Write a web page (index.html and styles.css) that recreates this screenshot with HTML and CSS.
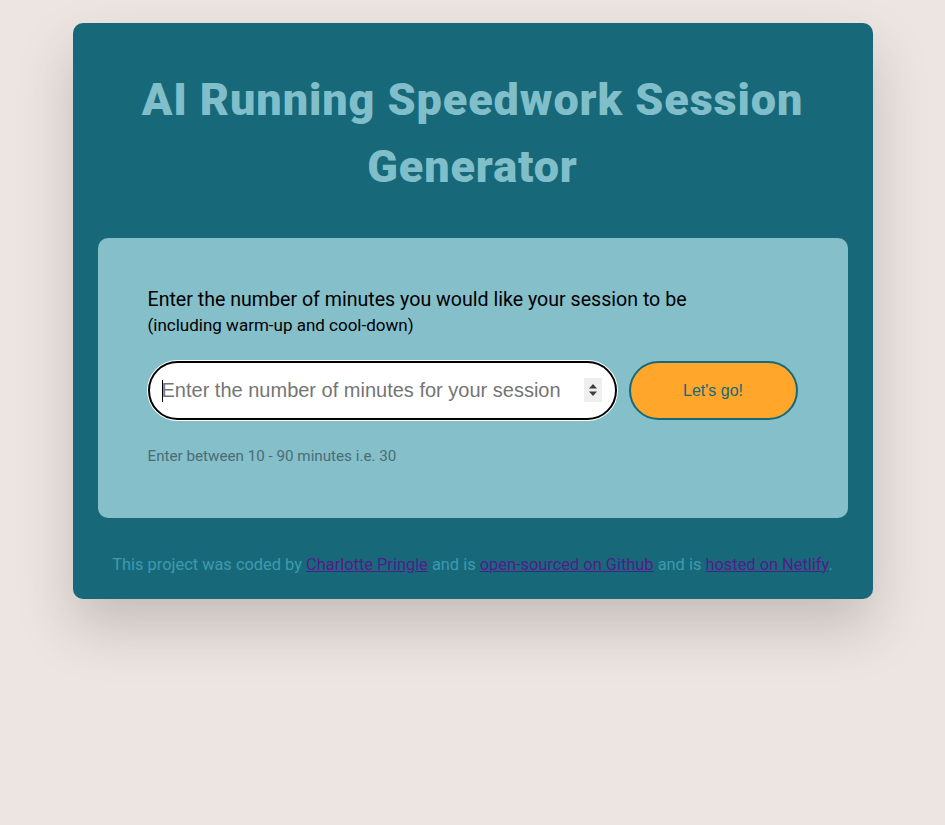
FILE: index.html
```html
<!DOCTYPE html>
<html lang="en">
<head>
<meta charset="utf-8">
<title>AI Running Speedwork Session Generator</title>
<link rel="stylesheet" href="styles.css">
</head>
<body>
<div class="container">
  <h1 class="title">AI Running Speedwork Session Generator</h1>
  <div class="panel">
    <p class="label">Enter the number of minutes you would like your session to be<br><span class="sub">(including warm-up and cool-down)</span></p>
    <form class="form">
      <div class="field">
        <span class="caret"></span>
        <input class="input" type="text" placeholder="Enter the number of minutes for your session">
        <span class="spinner"><svg width="10" height="18" viewBox="0 0 10 18"><path d="M1 7.5 L5 3 L9 7.5 Z M1 10.5 L5 15 L9 10.5 Z" fill="#3c3c3c"/></svg></span>
      </div>
      <button class="btn" type="button">Let's go!</button>
    </form>
    <p class="hint">Enter between 10 - 90 minutes i.e. 30</p>
  </div>
  <footer class="footer">This project was coded by <a href="#">Charlotte Pringle</a> and is <a href="#">open-sourced on Github</a> and is <a href="#">hosted on Netlify</a>.</footer>
</div>
</body>
</html>
```
FILE: styles.css
```css
html, body { margin: 0; padding: 0; }
html { background: #ece5e1; }
body {
  background: #ece5e1;
  font-family: Roboto, "Noto Sans", sans-serif;
  padding-top: 23px;
  min-height: 825px;
  box-sizing: border-box;
}
.container {
  width: 800px;
  margin: 0 auto;
  background: #17697a;
  border-radius: 10px;
  box-shadow: 0 28px 55px rgba(60,50,50,0.22);
  padding: 43px 25px 0;
  box-sizing: border-box;
  height: 576px;
}
.title {
  margin: 0 20px;
  font-size: 45px;
  line-height: 67px;
  font-weight: 900;
  color: #80bfca;
  text-align: center;
  letter-spacing: 0.9px;
}
.panel {
  margin-top: 38px;
  background: #84bfca;
  border-radius: 10px;
  height: 280px;
  box-sizing: border-box;
  padding: 50px 50px 0;
}
.label {
  margin: 0;
  font-size: 19.6px;
  line-height: 24px;
  color: #000;
}
.sub { font-size: 17px; line-height: 27px; }
.form {
  display: flex;
  gap: 12px;
  margin-top: 22px;
}
.field {
  position: relative;
  width: 469px;
  height: 59px;
}
.input {
  width: 100%;
  height: 100%;
  box-sizing: border-box;
  border: 2px solid #000;
  border-radius: 30px;
  box-shadow: 0 0 0 1px #fff;
  background: #fff;
  padding: 0 12px;
  font-family: "Liberation Sans", Arial, sans-serif;
  font-size: 20px;
  outline: none;
}
.input::placeholder { color: #757575; }
.caret {
  position: absolute;
  left: 14px;
  top: 19px;
  width: 1px;
  height: 22px;
  background: #000;
}
.spinner {
  position: absolute;
  left: 436px;
  top: 17px;
  width: 18px;
  height: 24px;
  background: #efefef;
  display: flex;
  align-items: center;
  justify-content: center;
}
.btn {
  width: 169px;
  height: 59px;
  box-sizing: border-box;
  background: #ffa62b;
  border: 2px solid #16697a;
  border-radius: 30px;
  color: #16697a;
  font-family: "Liberation Sans", Arial, sans-serif;
  font-size: 16px;
}
.hint {
  margin: 27px 0 0;
  font-size: 15.2px;
  color: #4a6d74;
}
.footer {
  margin-top: 37px;
  text-align: center;
  font-size: 16.4px;
  color: #3e9ab0;
}
.footer a { color: #551a8b; }
```
